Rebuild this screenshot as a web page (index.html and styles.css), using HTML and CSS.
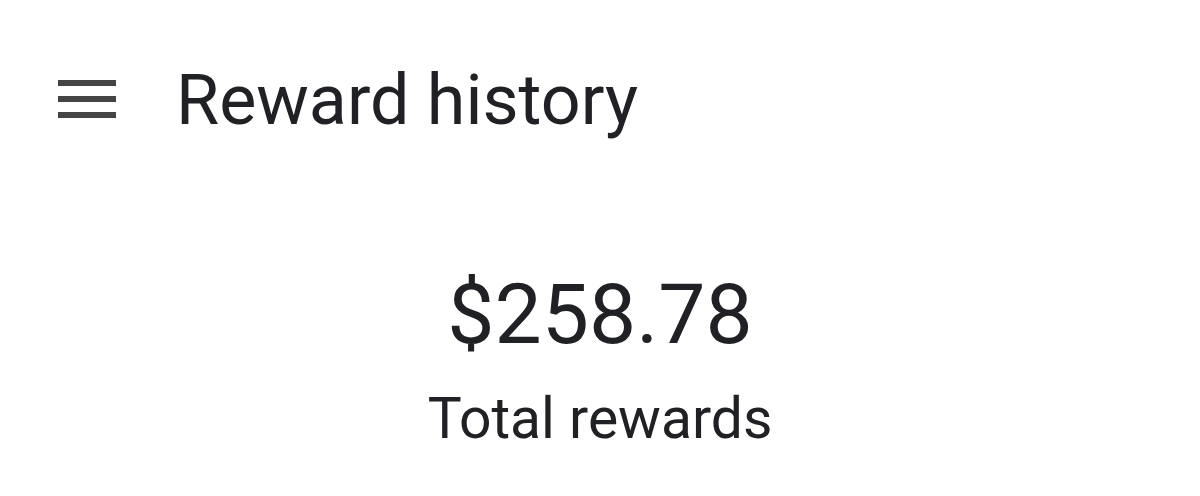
FILE: index.html
```html
<!DOCTYPE html>
<html>
<head>
    <meta charset="UTF-8" />
    <title>Reward history</title>
    <link rel="stylesheet" href="styles.css">
</head>
<body>
    <div class="top-bar">
        <button class="menu-btn" aria-label="Menu">
            <svg width="58" height="38" viewBox="0 0 58 38">
                <rect x="0" y="0" width="58" height="6" fill="#444"/>
                <rect x="0" y="16" width="58" height="6" fill="#444"/>
                <rect x="0" y="32" width="58" height="6" fill="#444"/>
            </svg>
        </button>
        <h1 class="title">Reward history</h1>
    </div>

    <div class="summary">
        <div class="amount">$258.78</div>
        <div class="label">Total rewards</div>
    </div>
</body>
</html>
```

FILE: styles.css
```css
body { margin: 0; background: #fff; font-family: Roboto, sans-serif; color: #202124; height: 496px; overflow: hidden; }

.top-bar {
    display: flex;
    align-items: center;
    padding: 62px 0 0 58px;
    height: 76px;
}
.menu-btn {
    border: none;
    background: none;
    padding: 0;
    margin: -2px 60px 0 0;
    display: flex;
}
.title {
    margin: 0;
    font-size: 70px;
    font-weight: 400;
    line-height: 76px;
}

.summary {
    display: flex;
    flex-direction: column;
    align-items: center;
    padding-top: 127px;
}
.amount { font-size: 84px; line-height: 100px; }
.label { font-size: 57px; line-height: 70px; margin-top: 19px; }
```
